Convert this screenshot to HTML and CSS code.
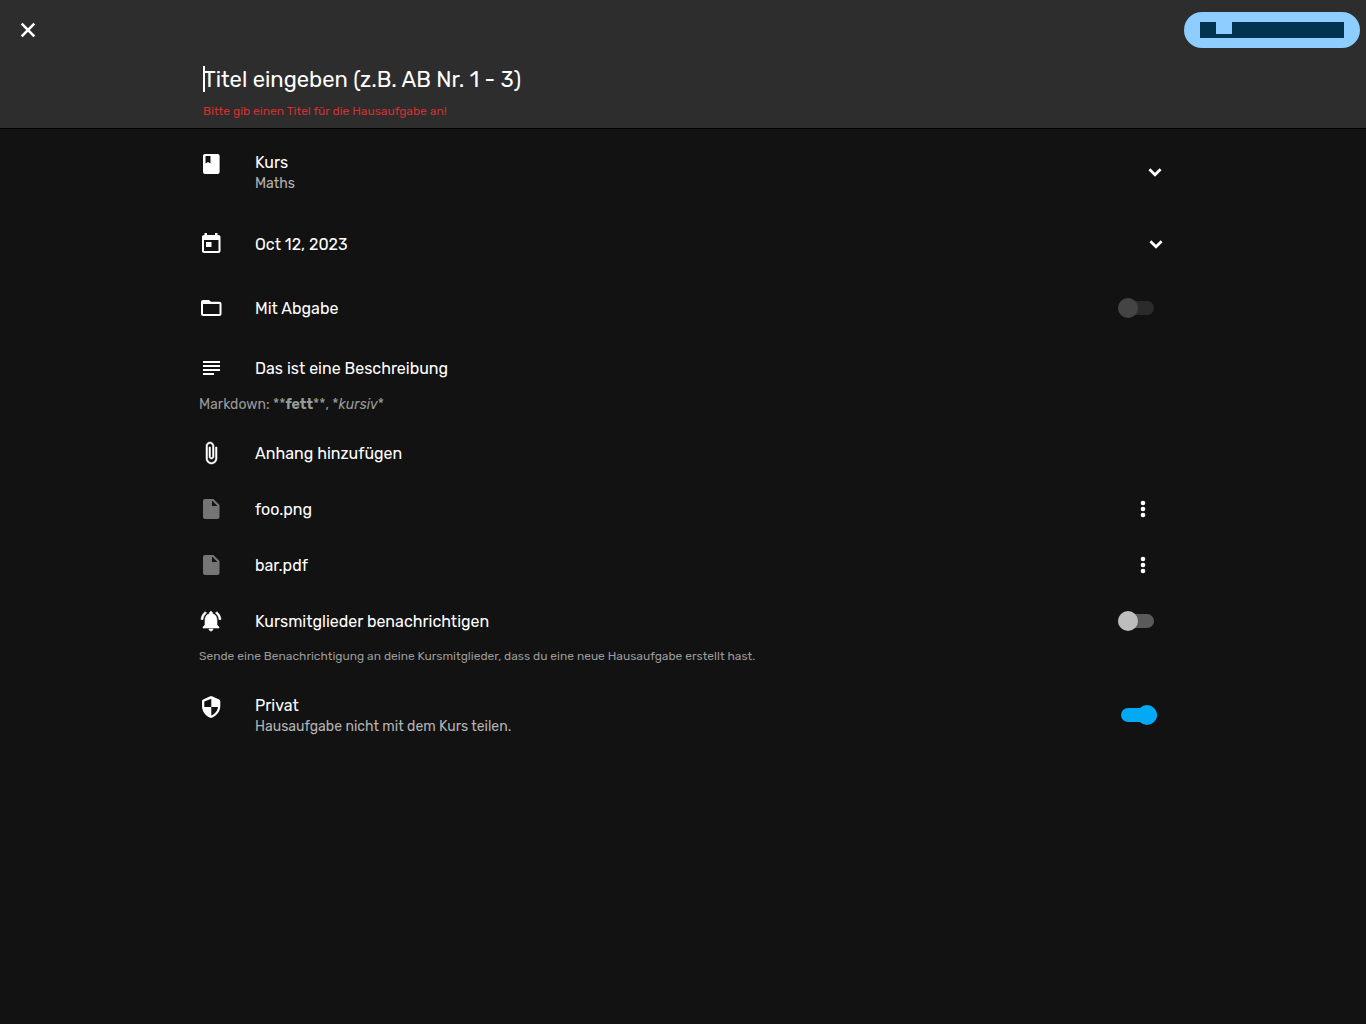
FILE: index.html
```html
<!DOCTYPE html>
<html lang="de">
<head>
<meta charset="utf-8">
<title>Hausaufgabe</title>
<link rel="stylesheet" href="styles.css">
</head>
<body>
<header class="header">
  <div class="toolbar">
    <svg class="icon" viewBox="0 0 24 24"><path d="M5.700 5.700l12.600 12.600M18.300 5.700L5.700 18.300" fill="none" stroke="currentColor" stroke-width="2.600"/></svg>
    <div class="save"><svg width="144" height="16" viewBox="0 0 144 16"><path d="M0 0H16V12H32V0H144V16H0Z"/></svg></div>
  </div>
  <div class="title-field">
    <div class="title"><span class="caret"></span><span>Titel eingeben (z.B. AB Nr. 1 - 3)</span></div>
    <div class="error"><span>Bitte gib einen Titel für die Hausaufgabe an!</span></div>
  </div>
</header>
<main class="form">
  <div class="row tall">
    <svg class="icon" viewBox="0 0 24 24"><path d="M6 2c-1.100 0-2 .9-2 2v16c0 1.100.9 2 2 2h12.600c1.100 0 2-.9 2-2V4c0-1.100-.9-2-2-2zM6.500 4h5v7.500l-2.500-1.500-2.500 1.500z"/></svg>
    <div class="label"><span>Kurs</span><small>Maths</small></div>
    <svg class="icon chevron" viewBox="0 0 24 24"><path d="M6.400 9.200L12 14.800l5.600-5.600" fill="none" stroke="currentColor" stroke-width="2.700"/></svg>
  </div>
  <div class="row date">
    <svg class="icon" viewBox="0 0 24 24"><path d="M19.500 3H18.500V1h-2.500v2H8V1H5.500v2H5c-1.100 0-2 .9-2 2v14c0 1.100.9 2 2 2h14.500c1.100 0 2-.9 2-2V5c0-1.100-.9-2-2-2zm0 16H5V8h14.500v11zM7 10h5.500v5H7z"/></svg>
    <div class="label"><span>Oct 12, 2023</span></div>
    <svg class="icon chevron" viewBox="0 0 24 24"><path d="M6.400 9.200L12 14.800l5.600-5.600" fill="none" stroke="currentColor" stroke-width="2.700"/></svg>
  </div>
  <div class="row">
    <svg class="icon" viewBox="0 0 24 24"><path d="M20.500 5.700H12L10 4H4c-1.100 0-1.990.9-1.990 2L2 18c0 1.100.9 2 2 2h16.500c1.100 0 2-.9 2-2V7.700c0-1.100-.9-2-2-2zm0 12.300H4V8h16.500v10z"/></svg>
    <div class="label"><span>Mit Abgabe</span></div>
    <div class="switch disabled"></div>
  </div>
  <div class="row description">
    <svg class="icon" viewBox="0 0 24 24"><path d="M4 5h17v2H4zM4 9h17v2H4zM4 13h17v2H4zM4 17h11v2H4z"/></svg>
    <div class="label"><span>Das ist eine Beschreibung</span></div>
  </div>
  <div class="markdown"><span>Markdown: **<b>fett</b>**, *<i>kursiv</i>*</span></div>
  <div class="row">
    <svg class="icon" viewBox="0 0 24 24"><path d="M16.500 6v11.500c0 2.210-1.790 4-4 4s-4-1.790-4-4V5c0-1.380 1.120-2.500 2.500-2.500s2.500 1.120 2.500 2.500v10.500c0 .55-.45 1-1 1s-1-.45-1-1V6H10v9.500c0 1.380 1.120 2.500 2.500 2.500s2.500-1.120 2.500-2.500V5c0-2.210-1.790-4-4-4S7 2.790 7 5v12.500c0 3.040 2.460 5.500 5.500 5.500s5.500-2.460 5.500-5.500V6h-1.500z" stroke="currentColor" stroke-width=".5"/></svg>
    <div class="label"><span>Anhang hinzufügen</span></div>
  </div>
  <div class="row">
    <svg class="icon file" viewBox="0 0 24 24"><path d="M6 2c-1.100 0-2 .9-2 2v16c0 1.100.9 2 2 2h12.500c1.100 0 2-.9 2-2V8l-6-6H6zm7 7V3.500L18.500 9H13z"/></svg>
    <div class="label"><span>foo.png</span></div>
    <svg class="icon more" viewBox="0 0 24 24"><circle cx="12" cy="6" r="2.300"/><circle cx="12" cy="12" r="2.300"/><circle cx="12" cy="18" r="2.300"/></svg>
  </div>
  <div class="row">
    <svg class="icon file" viewBox="0 0 24 24"><path d="M6 2c-1.100 0-2 .9-2 2v16c0 1.100.9 2 2 2h12.500c1.100 0 2-.9 2-2V8l-6-6H6zm7 7V3.500L18.500 9H13z"/></svg>
    <div class="label"><span>bar.pdf</span></div>
    <svg class="icon more" viewBox="0 0 24 24"><circle cx="12" cy="6" r="2.300"/><circle cx="12" cy="12" r="2.300"/><circle cx="12" cy="18" r="2.300"/></svg>
  </div>
  <div class="row">
    <svg class="icon" viewBox="0 0 24 24"><path d="M7.580 4.080L6.150 2.650C3.750 4.480 2.170 7.300 2.030 10.500h2c.15-2.650 1.510-4.970 3.550-6.420zm12.390 6.420h2c-.15-3.200-1.730-6.020-4.120-7.850l-1.420 1.430c2.020 1.450 3.390 3.770 3.540 6.420zM18 11c0-3.070-1.640-5.640-4.500-6.320V4c0-.83-.67-1.500-1.500-1.500s-1.500.67-1.500 1.500v.68C7.630 5.360 6 7.920 6 11v5l-2 2v1h16v-1l-2-2v-5zm-6 11c.14 0 .27-.01.4-.04.65-.14 1.180-.58 1.440-1.180.1-.24.15-.5.15-.78h-4c.01 1.100.9 2 2.010 2z" stroke="currentColor" stroke-width=".6"/></svg>
    <div class="label"><span>Kursmitglieder benachrichtigen</span></div>
    <div class="switch"></div>
  </div>
  <div class="hint"><span>Sende eine Benachrichtigung an deine Kursmitglieder, dass du eine neue Hausaufgabe erstellt hast.</span></div>
  <div class="row tall">
    <svg class="icon" viewBox="0 0 24 24"><path d="M11.190 1.360l-7 3.110C3.470 4.790 3 5.510 3 6.300V11c0 5.550 3.840 10.740 9 12 5.160-1.260 9.300-6.450 9.300-12V6.300c0-.79-.47-1.510-1.190-1.830l-7-3.110c-.6-.23-1.300-.23-1.920 0zM12.300 12H19c-.53 4.120-3.280 7.300-6.700 8.500V12H5.300V6.600l7-2.900V12z"/></svg>
    <div class="label"><span>Privat</span><small>Hausaufgabe nicht mit dem Kurs teilen.</small></div>
    <div class="switch on"></div>
  </div>
</main>
</body>
</html>
```
FILE: styles.css
```css
* { box-sizing: border-box; }
body {
  margin: 0;
  min-height: 100vh;
  background: #121212;
  color: #fff;
  font-family: Rubik, Roboto, "Liberation Sans", sans-serif;
  font-size: 16px;
}
span, small { white-space: nowrap; }
.header { height: 129px; background: #2d2d2d; border-bottom: 1px solid #000; }
.toolbar { display: flex; justify-content: space-between; align-items: center; height: 60px; padding: 0 6px 0 16px; }
.icon { width: 24px; height: 24px; flex: none; fill: currentColor; }
.save { display: flex; align-items: center; justify-content: center; width: 176px; height: 36px; border-radius: 18px; background: #8ecdff; }
.save svg { fill: #00344f; }
.title-field { width: 960px; margin: 0 auto; }
.title { display: flex; align-items: center; height: 38px; font-size: 22px; }
.caret { width: 2px; height: 26px; margin-right: -2px; background: #fff; }
.error { height: 26px; line-height: 26px; font-size: 12px; color: #d32f2f; }
.form { width: 968px; margin: 0 auto; padding-top: 7px; }
.row { display: flex; align-items: center; height: 56px; padding-right: 13px; }
.label { flex: 1; margin-left: 32px; line-height: 20px; padding-top: 2px; }
.label span, .label small { display: block; width: max-content; }
.label small { font-size: 14px; line-height: 20px; color: #b3b3b3; padding-top: 1px; }
.row.tall { height: 72px; align-items: flex-start; padding-top: 16px; padding-right: 10px; }
.tall .label { padding-top: 1px; }
.row.tall .chevron { margin-top: 8px; margin-right: -10px; }
.row.date { height: 72px; }
.date .chevron { margin-right: -14px; }
.description { margin-top: 4px; }
.markdown { height: 29px; padding-top: 1px; line-height: 16px; font-size: 14px; color: #999; }
.more { margin-right: -1px; }
.file { color: #757575; }
.switch { display: flex; align-items: center; width: 36px; height: 14px; border-radius: 7px; background: #5a5a5a; }
.switch::before { content: ""; width: 20px; height: 20px; border-radius: 50%; background: #bdbdbd; flex: none; }
.switch.disabled { background: #2b2b2b; }
.switch.disabled::before { background: #444; }
.switch.on { margin-top: 13px; background: #03a9f4; justify-content: flex-end; }
.switch.on::before { background: #03a9f4; }
.hint { height: 30px; line-height: 14px; font-size: 12px; color: #999; }
```
